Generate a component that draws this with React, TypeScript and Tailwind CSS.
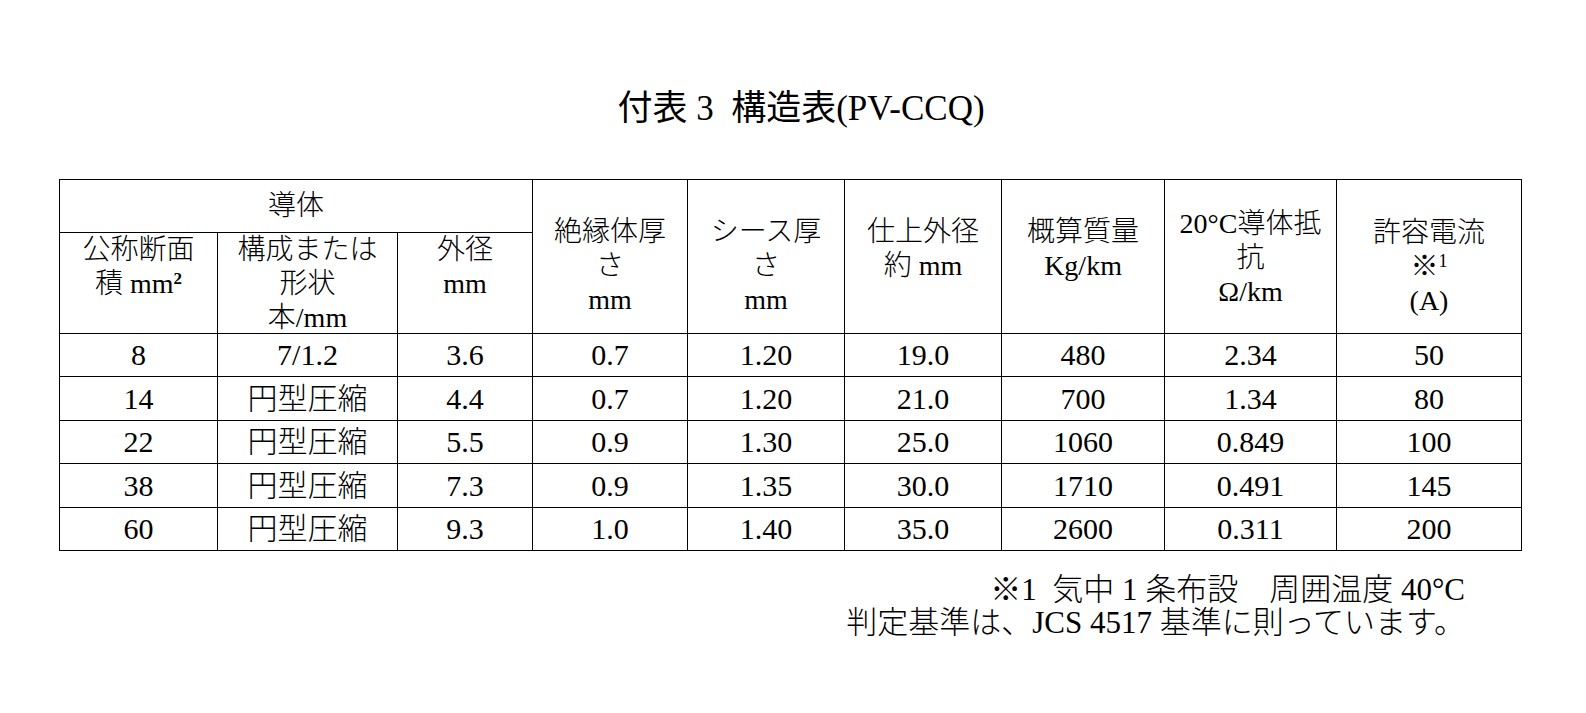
import React from 'react';

const rows = [
  ['8', '7/1.2', '3.6', '0.7', '1.20', '19.0', '480', '2.34', '50'],
  ['14', '円型圧縮', '4.4', '0.7', '1.20', '21.0', '700', '1.34', '80'],
  ['22', '円型圧縮', '5.5', '0.9', '1.30', '25.0', '1060', '0.849', '100'],
  ['38', '円型圧縮', '7.3', '0.9', '1.35', '30.0', '1710', '0.491', '145'],
  ['60', '円型圧縮', '9.3', '1.0', '1.40', '35.0', '2600', '0.311', '200'],
];

const widths = [158, 180, 135, 155, 157, 157, 163, 172, 185];

export default function App() {
  return (
    <div
      className="w-[1586px] h-[713px] bg-white text-black overflow-hidden flex flex-col"
      style={{ fontFamily: '"Liberation Serif", "Noto Sans CJK JP", serif' }}
    >
      {/* Title */}
      <h1 className="pt-[89px] h-[129px] text-[35px] leading-[40px] font-normal text-center pl-[16px]">
        付表 3&nbsp; 構造表(PV-CCQ)
      </h1>

      {/* Table */}
      <table className="mt-[50px] ml-[59px] w-[1462px] table-fixed border-collapse font-light text-center">
        <colgroup>
          {widths.map((w, i) => (
            <col key={i} style={{ width: w }} />
          ))}
        </colgroup>
        <thead className="text-[28px] leading-[34px]">
          <tr className="h-[53px]">
            <th colSpan={3} className="border border-black font-light align-middle">導体</th>
            <th rowSpan={2} className="border border-black font-light align-top pt-[35px]">
              絶縁体厚<br />さ<br />mm
            </th>
            <th rowSpan={2} className="border border-black font-light align-top pt-[35px]">
              シース厚<br />さ<br />mm
            </th>
            <th rowSpan={2} className="border border-black font-light align-top pt-[35px]">
              仕上外径<br />約 mm
            </th>
            <th rowSpan={2} className="border border-black font-light align-top pt-[35px]">
              概算質量<br />Kg/km
            </th>
            <th rowSpan={2} className="border border-black font-light align-top pt-[27px]">
              20°C導体抵<br />抗<br />Ω/km
            </th>
            <th rowSpan={2} className="border border-black font-light align-top pt-[36px]">
              許容電流<br />
              ※<span className="relative -top-[9px] text-[18px] leading-none">1</span>
              <br />(A)
            </th>
          </tr>
          <tr className="h-[101px]">
            <th className="border border-black font-light align-top p-0">
              <div className="h-[98px]">
                公称断面<br />積 mm<span className="relative -top-[9px] text-[17px] font-bold leading-none">2</span>
              </div>
            </th>
            <th className="border border-black font-light align-top p-0">
              <div className="h-[98px]">
                構成または<br />形状<br />本/mm
              </div>
            </th>
            <th className="border border-black font-light align-top p-0">
              <div className="h-[98px]">
                外径<br />mm
              </div>
            </th>
          </tr>
        </thead>
        <tbody className="text-[30px] leading-[34px]">
          {rows.map((r, i) => (
            <tr key={i} className={i % 2 === 0 ? 'h-[43px]' : 'h-[44px]'}>
              {r.map((c, j) => (
                <td key={j} className="border border-black align-middle">{c}</td>
              ))}
            </tr>
          ))}
        </tbody>
      </table>

      {/* Notes */}
      <div className="mt-[22px] pr-[121px] text-right text-[31px] leading-[33px] font-light">
        <p>※1&nbsp; 気中 1 条布設　周囲温度 40°C</p>
        <p>判定基準は、JCS 4517 基準に則っています。</p>
      </div>
    </div>
  );
}
